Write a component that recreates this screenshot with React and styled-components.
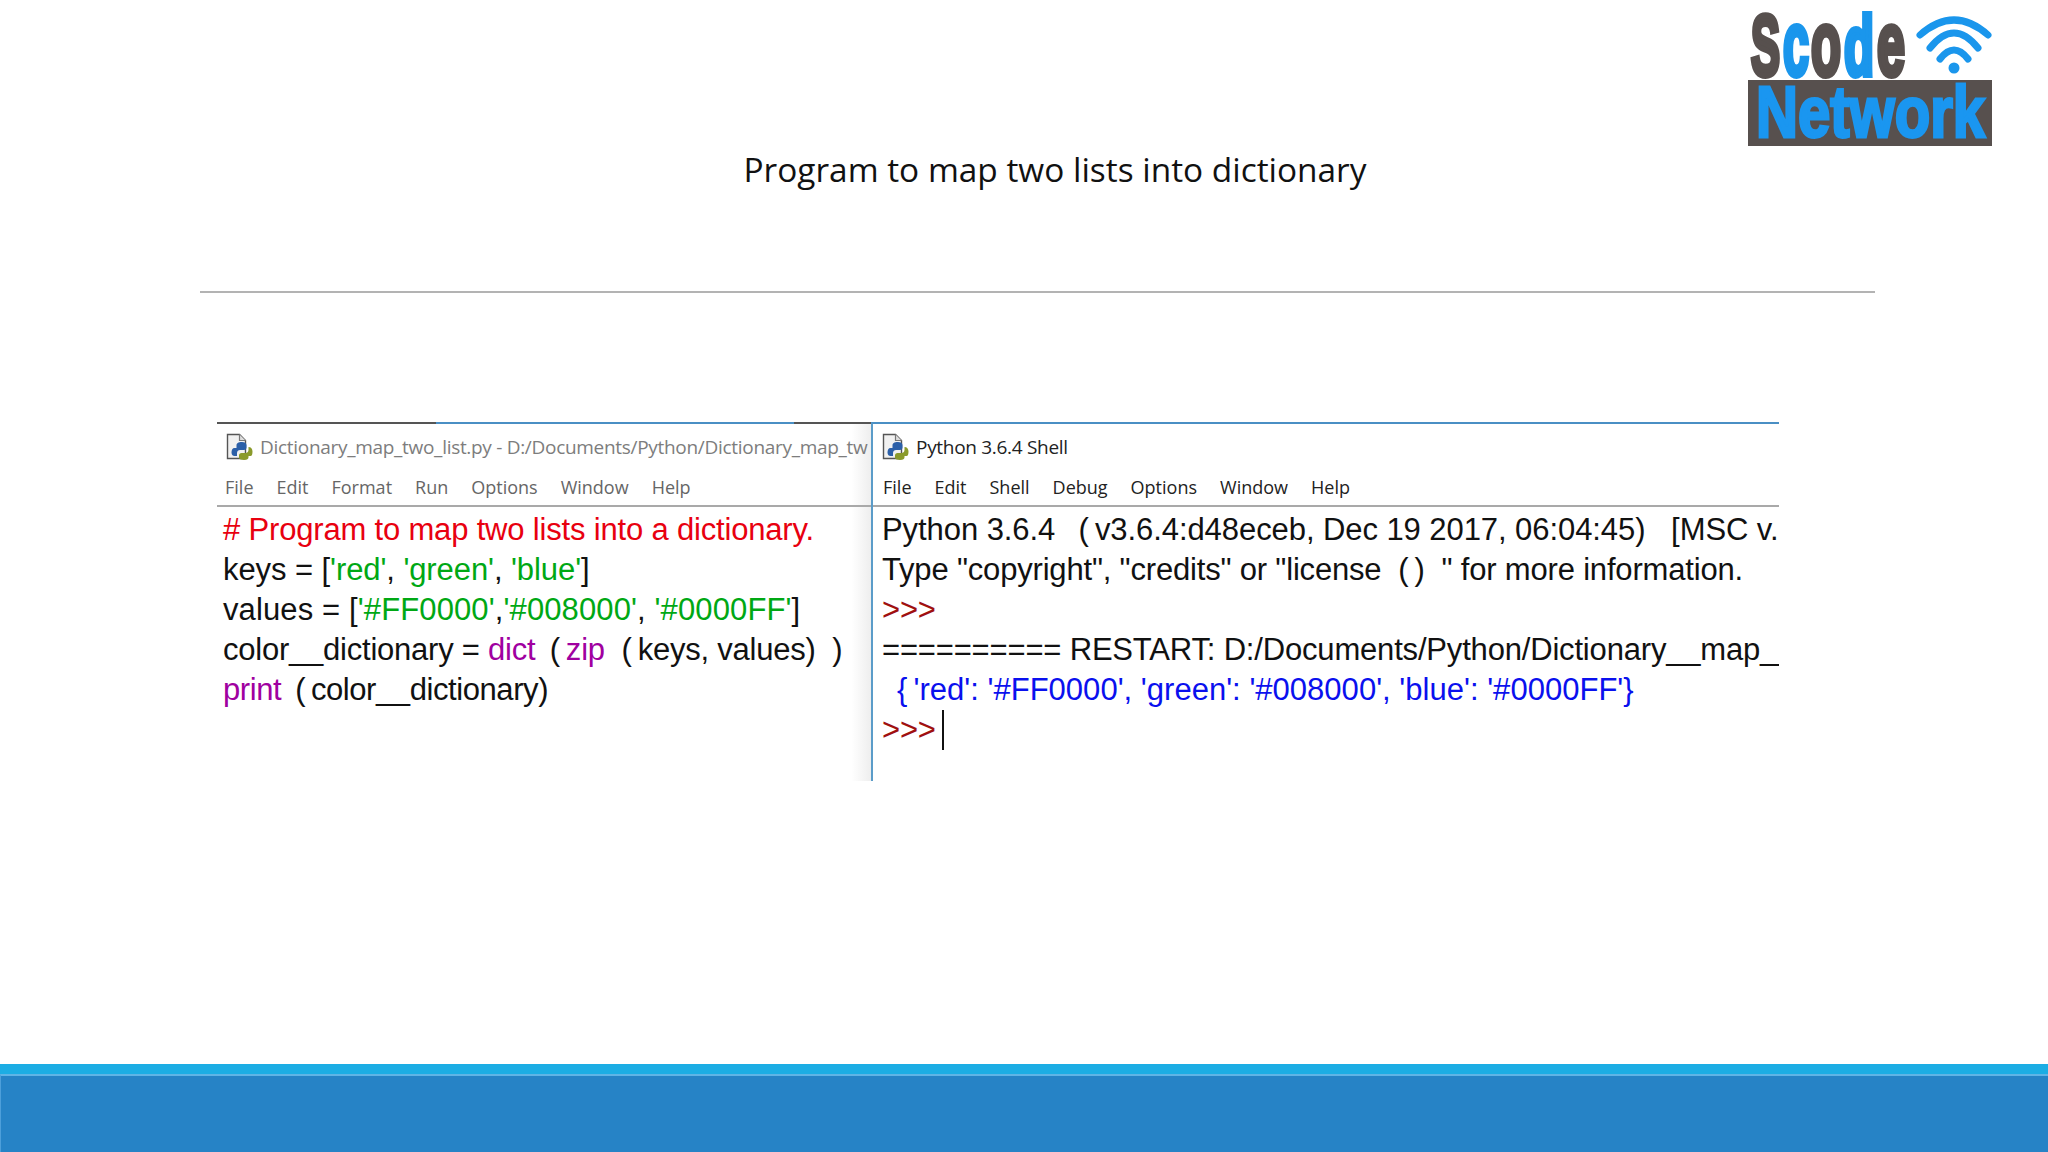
import React from "react";
import styled, { createGlobalStyle } from "styled-components";

const Global = createGlobalStyle`
  html, body {
    margin: 0;
    padding: 0;
    background: #fff;
  }
`;

const Slide = styled("div")`
  display: flex;
  flex-direction: column;
  width: 2048px;
  height: 1152px;
  overflow: hidden;
  background: #fff;
`;

const Header = styled("header")`
  display: grid;
  grid-template-columns: 1fr 248px;
  height: 291px;
  padding: 11px 52px 0 362px;
  box-sizing: border-box;
`;

const Title = styled("h1")`
  margin: 135px 0 0;
  font: 400 33.4px/46px "Open Sans", sans-serif;
  color: #111;
  text-align: center;
`;

const Rule = styled("hr")`
  width: 1675px;
  height: 2px;
  margin: 0 0 0 200px;
  border: 0;
  background: #b3b3b3;
`;

const Shot = styled("div")`
  display: flex;
  width: 1562px;
  height: 359px;
  margin: 129px 0 0 217px;
`;

const Pane = styled("section")`
  position: relative;
  width: ${(p) => p.$width}px;
  flex: none;
  box-sizing: border-box;
  border-top: 2px solid #4a8fc4;
  border-left: ${(p) => (p.$divider ? "2px solid #5b9cc9" : "0")};
  background: ${(p) =>
    p.$shaded
      ? "linear-gradient(90deg, #fff 97%, #eeeeee 100%)"
      : "#fff"};
`;

const PaneClip = styled("div")`
  height: 100%;
  overflow: hidden;
`;

const TopEdge = styled("span")`
  position: absolute;
  top: -2px;
  height: 2px;
  left: ${(p) => p.$left}px;
  width: ${(p) => p.$width}px;
  background: #555;
`;

const TitleBar = styled("div")`
  display: flex;
  align-items: center;
  height: 45px;
  padding-left: ${(p) => p.$inset}px;
  gap: 7px;
  white-space: pre;
`;

const TitleText = styled("span")`
  font: 400 19px/24px "Open Sans", sans-serif;
  letter-spacing: -0.3px;
  color: ${(p) => p.$color};
`;

const MenuBar = styled("nav")`
  display: flex;
  align-items: center;
  gap: ${(p) => p.$gap}px;
  height: 36px;
  padding-left: ${(p) => p.$inset}px;
  border-bottom: 2px solid #a9a9a9;
`;

const MenuItem = styled("span")`
  font: 400 18px/24px "Open Sans", sans-serif;
  color: ${(p) => p.$color};
`;

const Code = styled("div")`
  padding: 3px 0 0 ${(p) => p.$inset}px;
  white-space: pre;
`;

const Line = styled("div")`
  height: 40px;
  font: 400 31px/40px "Liberation Sans", Arial, sans-serif;
  letter-spacing: ${(p) => p.$track ?? -0.18}px;
  color: #111;
`;

const Tok = styled("span")`
  color: ${(p) => p.$c};
`;

const Caret = styled("span")`
  display: inline-block;
  width: 2px;
  height: 40px;
  margin-left: 6px;
  vertical-align: top;
  background: #111;
`;

const Footer = styled("footer")`
  margin-top: auto;
  height: 88px;
  box-sizing: border-box;
  border-top: 10px solid #1cade4;
`;

const FooterFill = styled("div")`
  height: 78px;
  box-sizing: border-box;
  border-top: 2px solid #5fb4e6;
  border-left: 1px solid #4d9fda;
  background: #2683c6;
`;

const LOGO_GREY = "#57504e";
const LOGO_BLUE = "#1a96ec";

const scode = [
  { ch: "S", x: 3, w: 29, size: 85, fill: LOGO_GREY },
  { ch: "c", x: 35, w: 26, size: 91, fill: LOGO_BLUE },
  { ch: "o", x: 63, w: 30, size: 91, fill: LOGO_GREY },
  { ch: "d", x: 96, w: 30, size: 85, fill: LOGO_BLUE },
  { ch: "e", x: 129, w: 28, size: 91, fill: LOGO_GREY },
];

const Logo = () => (
  <svg width="248" height="140" viewBox="0 0 248 140" role="img" aria-label="Scode Network">
    <g fontFamily="'Liberation Sans', Arial, sans-serif" fontWeight="700">
      {scode.map((l) => (
        <text
          key={l.ch}
          x={l.x}
          y="63.500"
          fontSize={l.size}
          textLength={l.w}
          lengthAdjust="spacingAndGlyphs"
          fill={l.fill}
          stroke={l.fill}
          strokeWidth="6"
        >
          {l.ch}
        </text>
      ))}
    </g>
    <g fill="none" stroke={LOGO_BLUE} strokeWidth="7" strokeLinecap="round">
      <path d="M172 24 Q206 -6 240 24" />
      <path d="M182 37 Q206 7 230 37" />
      <path d="M192 48 Q206 30 220 48" />
    </g>
    <circle cx="206" cy="57" r="5.500" fill={LOGO_BLUE} />
    <rect x="0" y="69" width="244" height="66" fill={LOGO_GREY} />
    <text
      x="8"
      y="126"
      textLength="229"
      lengthAdjust="spacingAndGlyphs"
      fontFamily="'Liberation Sans', Arial, sans-serif"
      fontWeight="700"
      fontSize="72"
      fill="#1a96f0"
      stroke="#1a96f0"
      strokeWidth="3"
    >
      Network
    </text>
  </svg>
);

const PyFile = () => (
  <svg width="28" height="28" viewBox="0 0 28 28" aria-hidden="true">
    <path d="M2.500 1.500h12l6 6v18h-18z" fill="#f1f1f1" stroke="#555" strokeWidth="1.400" />
    <path d="M14.500 1.500v6h6" fill="#ddd" stroke="#777" strokeWidth="1.200" />
    <path d="M17 9c-4 0-5.500 1.500-5.500 3.500V15h-2C7.500 15 6.500 17 6.500 19.500S8 23 9.500 23h2.500v-3c0-2 1.500-3 3-3h4c1.500 0 2.500-1 2.500-2.500V12c0-2-2-3-4.500-3z" fill="#2b5fa8" />
    <path d="M23.500 14v3c0 2-1.500 3-3 3h-4c-1.500 0-2.500 1-2.500 2.500V25c0 2 6 2.500 8 1.500 1.200-.6 1.500-1.500 1.500-2.500v-1h2c1.500 0 2-2 2-4.500s-1.500-4.500-4-4.500z" fill="#8a9a2b" />
  </svg>
);

const RED = "#e8000f";
const GREEN = "#00a814";
const PURPLE = "#a000a0";
const BLUE = "#0a10ee";
const PROMPT = "#a01010";

const leftMenu = ["File", "Edit", "Format", "Run", "Options", "Window", "Help"];
const rightMenu = ["File", "Edit", "Shell", "Debug", "Options", "Window", "Help"];

export default function App() {
  return (
    <Slide>
      <Global />
      <Header>
        <Title>Program to map two lists into dictionary</Title>
        <Logo />
      </Header>
      <Rule />
      <Shot>
        <Pane $width={654} $shaded>
          <TopEdge $left={0} $width={219} />
          <TopEdge $left={577} $width={77} />
          <PaneClip>
            <TitleBar $inset={8}>
              <PyFile />
              <TitleText $color="#7d7d7d">Dictionary_map_two_list.py - D:/Documents/Python/Dictionary_map_tw</TitleText>
            </TitleBar>
            <MenuBar $inset={8} $gap={23}>
              {leftMenu.map((item) => (
                <MenuItem key={item} $color="#666">{item}</MenuItem>
              ))}
            </MenuBar>
            <Code $inset={6}>
              <Line><Tok $c={RED}># Program to map two lists into a dictionary.</Tok></Line>
              <Line $track={-0.08}>keys = [<Tok $c={GREEN}>'red'</Tok>, <Tok $c={GREEN}>'green'</Tok>, <Tok $c={GREEN}>'blue'</Tok>]</Line>
              <Line $track={0.12}>values = [<Tok $c={GREEN}>'#FF0000'</Tok>,<Tok $c={GREEN}>'#008000'</Tok>, <Tok $c={GREEN}>'#0000FF'</Tok>]</Line>
              <Line $track={-0.23}>color__dictionary = <Tok $c={PURPLE}>dict</Tok> {"\u2009"}({"\u2009"}<Tok $c={PURPLE}>zip</Tok>  ({"\u2009"}keys, values)  )</Line>
              <Line $track={-0.42}><Tok $c={PURPLE}>print</Tok> {"\u2009"}({"\u2009"}color__dictionary)</Line>
            </Code>
          </PaneClip>
        </Pane>
        <Pane $width={908} $divider>
          <PaneClip>
            <TitleBar $inset={8}>
              <PyFile />
              <TitleText $color="#222">Python 3.6.4 Shell</TitleText>
            </TitleBar>
            <MenuBar $inset={10} $gap={23}>
              {rightMenu.map((item) => (
                <MenuItem key={item} $color="#222">{item}</MenuItem>
              ))}
            </MenuBar>
            <Code $inset={9}>
              <Line $track={-0.07}>Python 3.6.4  {"\u2009"}({"\u2009"}v3.6.4:d48eceb, Dec 19 2017, 06:04:45)   [MSC v.</Line>
              <Line>Type "copyright", "credits" or "license  ({"\u2009"})  " for more information.</Line>
              <Line><Tok $c={PROMPT}>&gt;&gt;&gt;</Tok></Line>
              <Line>========== RESTART: D:/Documents/Python/Dictionary__map__</Line>
              <Line $track={0.02}><Tok $c={BLUE}> {"\u2009"}{"{"}{"\u2009"}'red': '#FF0000', 'green': '#008000', 'blue': '#0000FF'{"}"}</Tok></Line>
              <Line><Tok $c={PROMPT}>&gt;&gt;&gt;</Tok><Caret /></Line>
            </Code>
          </PaneClip>
        </Pane>
      </Shot>
      <Footer>
        <FooterFill />
      </Footer>
    </Slide>
  );
}
